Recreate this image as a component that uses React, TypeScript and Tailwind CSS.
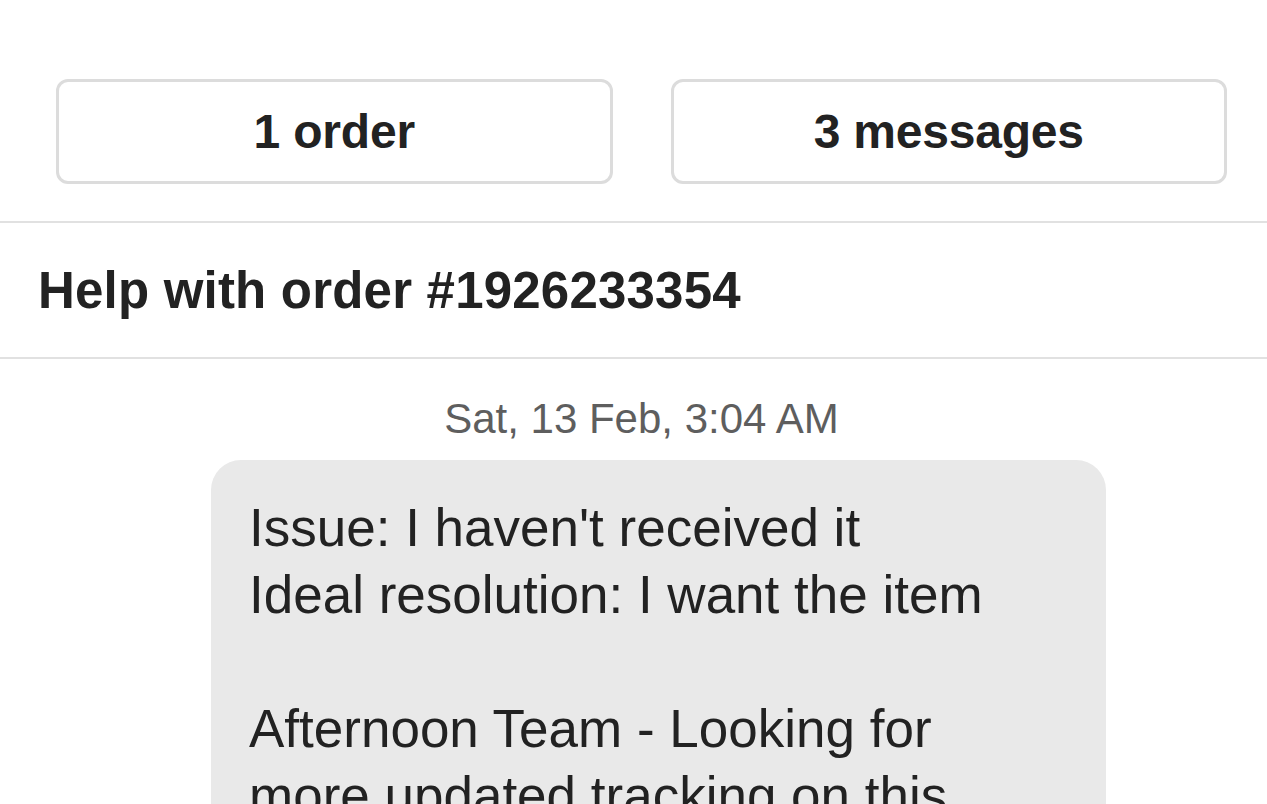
import React from 'react';

const bodyLines = [
    "Issue: I haven't received it",
    'Ideal resolution: I want the item',
    '',
    'Afternoon Team - Looking for',
    'more updated tracking on this',
];

const CountButton = ({ label }: { label: string }) => (
    <button className="flex-1 h-[105px] flex items-center justify-center border-[3px] border-[#dcdcdc] rounded-[12px] bg-white">
        <span className="text-[48px] leading-none font-bold text-[#222222] tracking-[-0.2px]">{label}</span>
    </button>
);

export default function App() {
    return (
        <div className="w-[1267px] h-[804px] overflow-hidden bg-white text-[#222222]" style={{ fontFamily: '"Liberation Sans", Arial, sans-serif' }}>
            {/* Summary buttons */}
            <div className="flex gap-[58px] pl-[56px] pr-[40px] pt-[79px] pb-[37px] border-b-2 border-[#e1e1e1]">
                <CountButton label="1 order" />
                <CountButton label="3 messages" />
            </div>

            {/* Conversation title */}
            <div className="h-[136px] flex items-center pl-[38px] border-b-2 border-[#e1e1e1]">
                <h1 className="text-[51px] leading-none font-bold tracking-[0.2px]">Help with order #1926233354</h1>
            </div>

            {/* Thread */}
            <div className="pl-[56px] pr-[40px]">
                <div className="mt-[39px] text-center text-[42px] leading-none text-[#5e5e5e]">
                    Sat, 13 Feb, 3:04 AM
                </div>
                <div className="mt-[20px] ml-[155px] w-[895px] bg-[#e9e9e9] rounded-[30px] pt-[34px] pl-[38px] pr-[38px] pb-[40px]">
                    {bodyLines.map((line, i) => (
                        <p key={i} className="text-[53px] leading-[67px] h-[67px] text-[#222222] whitespace-nowrap">
                            {line}
                        </p>
                    ))}
                </div>
            </div>
        </div>
    );
}
